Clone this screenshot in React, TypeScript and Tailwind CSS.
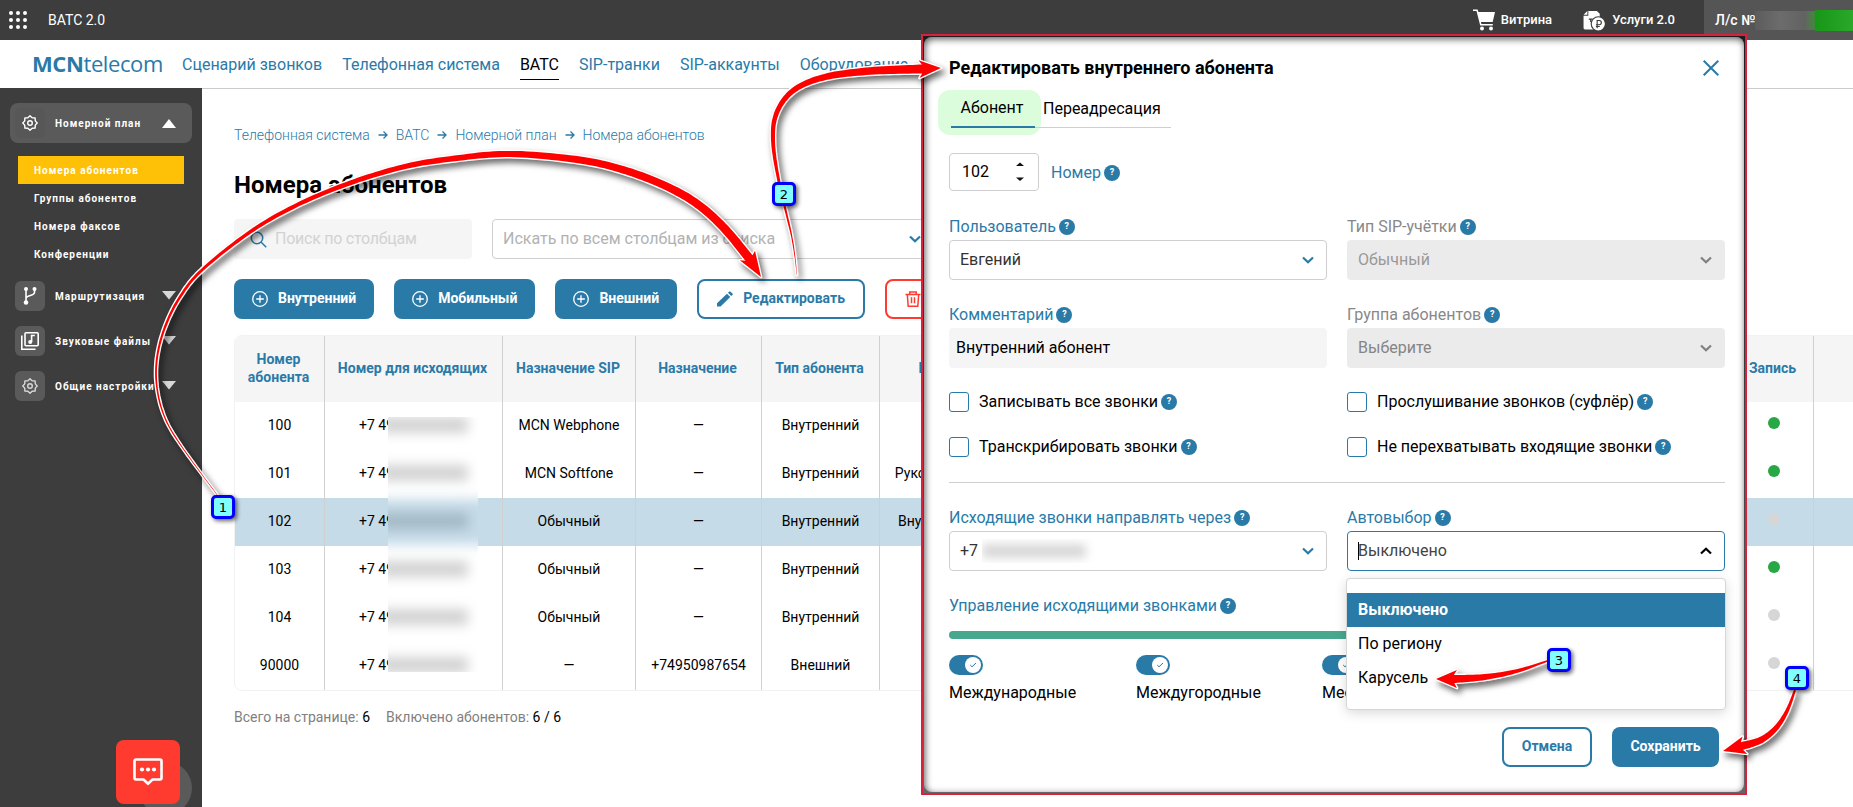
import type { ReactNode } from "react";
import { clsx } from "clsx";

type Point = [number, number];

const navItems = ["Сценарий звонков", "Телефонная система", "ВАТС", "SIP-транки", "SIP-аккаунты", "Оборудование"];
const crumbs = ["Телефонная система", "ВАТС", "Номерной план", "Номера абонентов"];
const planItems = ["Номера абонентов", "Группы абонентов", "Номера факсов", "Конференции"];

const rows = [
  { num: "100", sip: "MCN Webphone", target: "—", type: "Внутренний", note: "", rec: true },
  { num: "101", sip: "MCN Softfone", target: "—", type: "Внутренний", note: "Руководитель отдела", rec: true },
  { num: "102", sip: "Обычный", target: "—", type: "Внутренний", note: "Внутренний абонент", rec: false },
  { num: "103", sip: "Обычный", target: "—", type: "Внутренний", note: "", rec: true },
  { num: "104", sip: "Обычный", target: "—", type: "Внутренний", note: "", rec: false },
  { num: "90000", sip: "—", target: "+74950987654", type: "Внешний", note: "", rec: false }
];

const tableGrid = "grid grid-cols-[90px_178px_133px_126px_118px_172px_682px_80px_1fr]";

function Gear({ className }: { className?: string }) {
  return (
    <svg viewBox="0 0 16 16" className={clsx("size-4", className)} fill="none" stroke="currentColor" strokeWidth="1.4" strokeLinejoin="round">
      <path d="M8 .8 10.1 2.7 13.1 2.9 13.3 5.9 15.2 8 13.3 10.1 13.1 13.1 10.1 13.3 8 15.2 5.9 13.3 2.9 13.1 2.7 10.1.8 8 2.7 5.9 2.9 2.9 5.9 2.7Z" />
      <circle cx="8" cy="8" r="2.3" />
    </svg>
  );
}

function Branch() {
  return (
    <svg viewBox="0 0 16 20" className="h-5 w-4" fill="none" stroke="currentColor" strokeWidth="1.6">
      <path d="M4 3v13M12.500 3v3.500c0 3.500-8.500 2.500-8.500 6" />
      <circle cx="4" cy="3" r="2" fill="currentColor" stroke="none" />
      <circle cx="12.500" cy="3" r="2" fill="currentColor" stroke="none" />
      <circle cx="4" cy="16.500" r="2.300" fill="currentColor" stroke="none" />
    </svg>
  );
}

function Music() {
  return (
    <svg viewBox="0 0 18 18" className="size-[18px]" fill="none" stroke="currentColor" strokeWidth="1.600">
      <rect x="4" y=".8" width="13.200" height="13" rx="1" />
      <path d="M.8 3.500v13.700h13.700" />
      <path d="M10.600 10V3.500h3.200" />
      <circle cx="9.200" cy="10" r="2" fill="currentColor" stroke="none" />
    </svg>
  );
}

function Triangle({ up }: { up?: boolean }) {
  return (
    <svg viewBox="0 0 14 9" className={clsx("h-[9px] w-3.5", up ? "text-white" : "-translate-y-px text-[#d8d8d8]")} fill="currentColor">
      <path d={up ? "M7 0 14 9H0Z" : "M0 0h14L7 8.500Z"} />
    </svg>
  );
}

function Chevron({ up, className }: { up?: boolean; className?: string }) {
  return (
    <svg viewBox="0 0 12 8" className={clsx("h-2 w-3", className)} fill="none" stroke="currentColor" strokeWidth="2.200">
      <path d={up ? "M1 6.500 6 1.700l5 4.800" : "M1 1.500 6 6.300l5-4.800"} />
    </svg>
  );
}

function Help() {
  return (
    <span className="flex size-4 shrink-0 items-center justify-center rounded-full bg-[#2a7aa8] text-[9px] font-bold text-white">?</span>
  );
}

function Label({ children, muted }: { children: ReactNode; muted?: boolean }) {
  return (
    <div className={clsx("flex h-7 items-center gap-[3px] pt-0.5 text-base", muted ? "text-[#888888]" : "text-[#2a7aa8]")}>
      <span>{children}</span>
      <Help />
    </div>
  );
}

function Select({ children, variant = "normal" }: { children: ReactNode; variant?: "normal" | "disabled" | "open" }) {
  return (
    <div
      className={clsx(
        "flex h-10 items-center justify-between rounded border pr-3 pl-2.5 text-base",
        variant === "normal" && "border-[#cfcfcf] text-[#333333]",
        variant === "disabled" && "border-[#ebebeb] bg-[#ebebeb] text-[#999999]",
        variant === "open" && "border-[#2a7aa8] text-[#444444]"
      )}
    >
      <span className="relative flex items-center">
        {variant === "open" ? <i className="absolute left-0 h-[18px] w-px bg-black" /> : null}
        {children}
      </span>
      <Chevron
        up={variant === "open"}
        className={variant === "normal" ? "text-[#2a7aa8]" : variant === "open" ? "text-black" : "text-[#808080]"}
      />
    </div>
  );
}

function Check({ children }: { children: ReactNode }) {
  return (
    <div className="flex h-[45px] items-center gap-[3px]">
      <span className="mr-[7px] size-5 rounded-[3px] border border-[#2a7aa8]" />
      <span className="pt-px text-base">{children}</span>
      <Help />
    </div>
  );
}

function Toggle({ children }: { children: ReactNode }) {
  return (
    <div className="flex flex-col gap-2">
      <div className="flex h-5 w-[34px] items-center justify-end rounded-full bg-[#2a7aa8] pr-0.5">
        <span className="flex size-4 items-center justify-center rounded-full bg-white">
          <svg viewBox="0 0 8 6" className="h-1.5 w-2" fill="none" stroke="#2a7aa8" strokeWidth="1">
            <path d="M1.200 3 3 4.800 7 1" />
          </svg>
        </span>
      </div>
      <span className="text-base leading-5">{children}</span>
    </div>
  );
}

function AddButton({ children }: { children: ReactNode }) {
  return (
    <button className="flex h-10 items-center gap-2.5 rounded-lg bg-[#2a7aa8] px-[18px] text-sm font-bold text-white">
      <svg viewBox="0 0 16 16" className="size-4" fill="none" stroke="currentColor" strokeWidth="1.300">
        <circle cx="8" cy="8" r="7.300" />
        <path d="M8 4.200v7.600M4.200 8h7.600" />
      </svg>
      <span className="-translate-y-px">{children}</span>
    </button>
  );
}

// Smooth line through the points, sampled densely.
function sample(points: Point[]): Point[] {
  const out: Point[] = [];
  for (let i = 0; i < points.length - 1; i++) {
    const p0 = points[Math.max(0, i - 1)];
    const p1 = points[i];
    const p2 = points[i + 1];
    const p3 = points[Math.min(points.length - 1, i + 2)];
    for (let s = 0; s < 12; s++) {
      const t = s / 12;
      const at = (k: 0 | 1) =>
        0.5 *
        (2 * p1[k] +
          (p2[k] - p0[k]) * t +
          (2 * p0[k] - 5 * p1[k] + 4 * p2[k] - p3[k]) * t * t +
          (3 * p1[k] - p0[k] - 3 * p2[k] + p3[k]) * t * t * t);
      out.push([at(0), at(1)]);
    }
  }
  out.push(points[points.length - 1]);
  return out;
}

// Arrow whose shaft grows from `from` to `to` pixels and ends in a head.
function Arrow({ points, tip, from, to, head }: { points: Point[]; tip: Point; from: number; to: number; head: number }) {
  const line = sample(points);
  const run = [0];
  for (let i = 1; i < line.length; i++) {
    run.push(run[i - 1] + Math.hypot(line[i][0] - line[i - 1][0], line[i][1] - line[i - 1][1]));
  }
  const total = run[run.length - 1];
  const left: Point[] = [];
  const right: Point[] = [];
  line.forEach(([x, y], i) => {
    const a = line[Math.max(0, i - 1)];
    const b = line[Math.min(line.length - 1, i + 1)];
    const len = Math.hypot(b[0] - a[0], b[1] - a[1]) || 1;
    const nx = -(b[1] - a[1]) / len;
    const ny = (b[0] - a[0]) / len;
    const w = (from + ((to - from) * run[i]) / total) / 2;
    left.push([x + nx * w, y + ny * w]);
    right.push([x - nx * w, y - ny * w]);
  });
  const end = line[line.length - 1];
  const d = Math.hypot(tip[0] - end[0], tip[1] - end[1]);
  const ux = (tip[0] - end[0]) / d;
  const uy = (tip[1] - end[1]) / d;
  const barbs: Point[] = [
    [end[0] - ux * 3 - uy * head, end[1] - uy * 3 + ux * head],
    tip,
    [end[0] - ux * 3 + uy * head, end[1] - uy * 3 - ux * head]
  ];
  const path = "M" + [...left, ...barbs, ...right.reverse()].map((p) => p.map((n) => n.toFixed(1)).join(" ")).join("L") + "Z";
  return <path d={path} fill="#ff0000" stroke="#ffffff" strokeWidth="2.800" strokeLinejoin="round" paintOrder="stroke" />;
}

function Badge({ n, className }: { n: number; className: string }) {
  return (
    <div
      className={clsx(
        "absolute flex size-6 items-center justify-center rounded-[5px] border-[3px] border-[#0000ff] bg-[#80ffff] font-['DejaVu_Sans',sans-serif] text-[13px] leading-none text-black shadow-[2px_2px_4px_rgba(0,0,0,0.6)]",
        className
      )}
    >
      {n}
    </div>
  );
}

function TopBar() {
  return (
    <header className="flex h-10 shrink-0 items-center bg-[#3d3d3d] text-white">
      <svg viewBox="0 0 18 18" className="ml-[9px] size-[18px]" fill="currentColor">
        {[2, 9, 16].map((y) => [2, 9, 16].map((x) => <circle key={`${x}-${y}`} cx={x} cy={y} r="2" />))}
      </svg>
      <span className="ml-[21px] text-sm">ВАТС 2.0</span>
      <div className="ml-auto flex h-9 items-center text-[13px] font-medium">
        <svg viewBox="0 0 22 22" className="h-[22px] w-[22px]" fill="currentColor">
          <path d="M0 .5h4.600l.8 2.600H22l-2.300 10H7.900l.5 1.800h11.400v1.500H7.200L3.500 2H0Z" />
          <circle cx="9" cy="19.500" r="2" />
          <circle cx="18" cy="19.500" r="2" />
        </svg>
        <span className="ml-1.5">Витрина</span>
        <svg viewBox="0 0 23 21" className="ml-[31px] h-[21px] w-[23px] pt-px">
          <path d="M5 0h9l3 3v16.500H2A2 2 0 0 1 0 18V5h5Z" fill="#fff" />
          <path d="M0 4 4 0v4Z" fill="#fff" />
          <path d="M5.500 8.500h4M7.500 8.500v3" stroke="#3d3d3d" strokeWidth="1.200" />
          <circle cx="15.500" cy="13.500" r="7.500" fill="#fff" stroke="#3d3d3d" strokeWidth="1.200" />
          <path d="M14.300 18v-8h2.200a2.200 2.200 0 0 1 0 4.400h-3.500M13 16.300h4" stroke="#3d3d3d" strokeWidth="1.200" fill="none" />
        </svg>
        <span className="ml-1.5">Услуги 2.0</span>
      </div>
      <div className="ml-[29px] flex h-10 w-[149px] items-center overflow-hidden bg-[#555555] pl-[11px] text-sm font-medium">
        <span className="w-10 shrink-0 whitespace-nowrap">Л/с №</span>
        <div className="flex h-[21px] flex-1 items-center">
          <span className="h-[19px] w-[50px] bg-gradient-to-r from-[#5c5c5c] via-[#6c6c6c] to-[#626262]" />
          <span className="h-[19px] w-2.5 bg-gradient-to-r from-[#626262] to-[#3b8a36]" />
          <span className="h-[21px] flex-1 bg-gradient-to-r from-[#179617] to-[#2aa82a]" />
        </div>
      </div>
    </header>
  );
}

function Sidebar() {
  const groups = [
    { title: "Маршрутизация", icon: <Branch /> },
    { title: "Звуковые файлы", icon: <Music /> },
    { title: "Общие настройки", icon: <Gear className="text-[#d8d8d8]" /> }
  ];
  return (
    <aside className="relative w-[202px] shrink-0 bg-[#3d3d3d] px-2.5 pt-[15px] text-[10px] font-bold tracking-[1px] text-white">
      <div className="flex h-10 items-center rounded-lg bg-[#5a5a5a] pr-4 pl-[5px]">
        <span className="flex size-[30px] items-center justify-center rounded-md bg-[#575757]">
          <Gear />
        </span>
        <span className="ml-2.5 flex-1">Номерной план</span>
        <Triangle up />
      </div>
      <ul className="mx-2 mt-[13px]">
        {planItems.map((item, i) => (
          <li key={item} className={clsx("flex h-7 items-center pl-4", i === 0 && "bg-[#ffc107]")}>
            {item}
          </li>
        ))}
      </ul>
      <div className="mt-[13px] flex flex-col gap-[15px]">
        {groups.map((g) => (
          <div key={g.title} className="flex h-[30px] items-center pr-4 pl-[5px]">
            <span className="flex size-[30px] items-center justify-center rounded-md bg-[#5a5a5a]">{g.icon}</span>
            <span className="ml-2.5 flex-1 whitespace-nowrap">{g.title}</span>
            <Triangle />
          </div>
        ))}
      </div>
      <div className="absolute top-[673px] left-[138px] size-[54px] rounded-full bg-[#5a5a5a]" />
      <div className="absolute top-[652px] left-[116px] flex size-16 items-center justify-center rounded-lg bg-[#ff3b30]">
        <svg viewBox="0 0 30 28" className="h-7 w-[30px]" fill="none" stroke="#fff" strokeWidth="2.600" strokeLinejoin="round">
          <path d="M3 1.500h24a1.500 1.500 0 0 1 1.500 1.500v17a1.500 1.500 0 0 1-1.500 1.500h-7.500L15 25.800l-4.500-4.300H3A1.500 1.500 0 0 1 1.500 20V3A1.500 1.500 0 0 1 3 1.500Z" />
          <g fill="#fff" stroke="none">
            <circle cx="9" cy="11.500" r="2.100" />
            <circle cx="15" cy="11.500" r="2.100" />
            <circle cx="21" cy="11.500" r="2.100" />
          </g>
        </svg>
      </div>
    </aside>
  );
}

function SubscribersTable() {
  const heads = ["Номер абонента", "Номер для исходящих", "Назначение SIP", "Назначение", "Тип абонента", "Комментарий", "", "Запись", ""];
  return (
    <div className="relative mt-4 h-[356px] w-[1700px] rounded-lg border border-[#f2f2f2] text-sm">
      <div className={clsx(tableGrid, "h-[66px] rounded-tl-lg bg-[#f5f5f5] font-bold text-[#2a7aa8]")}>
        {heads.map((h, i) => (
          <div key={i} className="flex items-center justify-center border-r border-[#d0d0d0] pr-2 pb-0.5 pl-1.5 text-center leading-[18px]">
            {h}
          </div>
        ))}
      </div>
      {rows.map((r) => (
        <div
          key={r.num}
          className={clsx(
            tableGrid,
            "h-12 *:flex *:items-center *:justify-center *:border-r *:border-[#d0d0d0] *:pb-0.5",
            r.num === "102" && "bg-[#c5dbe8]"
          )}
        >
          <div>{r.num}</div>
          <div>
            <span className="w-[109px]">+7 49</span>
          </div>
          <div>{r.sip}</div>
          <div>{r.target}</div>
          <div>{r.type}</div>
          <div>{r.note}</div>
          <div />
          <div>
            <span className={clsx("mb-1 size-3 rounded-full", r.rec ? "bg-[#28a745]" : "bg-[#d6d6d6]")} />
          </div>
          <div />
        </div>
      ))}
      <div className="absolute top-[81px] left-[153px] h-[255px] w-[90px] overflow-hidden bg-white">
        <div className="absolute -inset-x-3 top-[82px] h-[46px] bg-[#c5dbe8] blur-[6px]" />
        <div className="absolute top-0 -left-2 flex flex-col gap-8">
          {rows.map((r) => (
            <span key={r.num} className={clsx("h-4 w-[88px] blur-[6px]", r.num === "102" ? "bg-[#a3b8c5]" : "bg-[#d2d2d2]")} />
          ))}
        </div>
      </div>
    </div>
  );
}

function MainContent() {
  return (
    <main className="w-[1651px] overflow-hidden border-t border-[#cccccc] pt-[34px] pl-8">
      <div className="flex h-6 items-center gap-2 text-sm font-light text-[#2a7aa8]">
        {crumbs.map((c, i) => (
          <div key={c} className="flex items-center gap-2">
            {i > 0 ? (
              <svg viewBox="1 0 10 10" className="size-2.5" fill="none" stroke="currentColor" strokeWidth="1.300">
                <path d="M1.500 5h8.500M6.500 1.500 10 5 6.500 8.500" />
              </svg>
            ) : null}
            <span>{c}</span>
          </div>
        ))}
      </div>
      <h1 className="mt-[22px] text-2xl leading-8 font-bold">Номера абонентов</h1>
      <div className="mt-[18px] flex gap-5 text-base">
        <div className="flex h-10 w-[238px] items-center gap-2 rounded bg-[#f5f5f5] pl-4 tracking-[-0.25px] text-[#d2d2d2]">
          <svg viewBox="0 0 17 17" className="size-[17px]" fill="none" stroke="#2a7aa8" strokeWidth="1.500">
            <circle cx="7" cy="7" r="5.700" />
            <path d="m11.200 11.200 5 5" />
          </svg>
          Поиск по столбцам
        </div>
        <div className="flex h-10 w-[440px] items-center justify-between rounded border border-[#cfcfcf] pr-2.5 pl-2.5 text-[#b2b2b2]">
          Искать по всем столбцам из списка
          <Chevron className="text-[#2a7aa8]" />
        </div>
      </div>
      <div className="mt-5 flex gap-5">
        <AddButton>Внутренний</AddButton>
        <AddButton>Мобильный</AddButton>
        <AddButton>Внешний</AddButton>
        <button className="flex h-10 items-center gap-2.5 rounded-lg border-2 border-[#2a7aa8] px-[18px] text-sm font-bold text-[#2a7aa8]">
          <svg viewBox="0 0 17 17" className="size-4" fill="currentColor">
            <path d="M0 16.500V13L10.600 2.800l3.500 3.500L3.800 16.500ZM11.600 1.900 12.900.7a1 1 0 0 1 1.500 0l2 2a1 1 0 0 1 0 1.500L15.100 5.400Z" />
          </svg>
          <span className="-translate-y-px">Редактировать</span>
        </button>
        <button className="flex h-10 w-40 items-center rounded-lg border-2 border-[#ff3b30] px-[18px] text-[#ff3b30]">
          <svg viewBox="0 0 16 16" className="size-4" fill="none" stroke="currentColor" strokeWidth="1.500">
            <path d="M.5 3.500h15M4.800 3.500V1h6.400v2.500M2.300 3.500l.9 11.700h9.600l.9-11.700M6.500 6.300v6M9.500 6.300v6" />
          </svg>
        </button>
      </div>
      <SubscribersTable />
      <div className="mt-4 flex gap-4 text-sm text-[#808080]">
        <span>
          Всего на странице: <span className="text-black">6</span>
        </span>
        <span>
          Включено абонентов: <span className="text-black">6 / 6</span>
        </span>
      </div>
    </main>
  );
}

function EditDialog() {
  return (
    <div className="absolute top-[34px] left-[921px] h-[761px] w-[826px] border-2 border-[#d6213f] bg-gradient-to-b from-[#1c1c1c] to-[#666666] p-px">
      <div className="h-full rounded-lg bg-white pt-[19px] pr-[19px] pl-[25px] shadow-[inset_1px_2px_7px_rgba(0,0,0,0.65)]">
        <div className="flex h-6 items-center justify-between pr-1.5">
          <h2 className="text-lg font-bold">Редактировать внутреннего абонента</h2>
          <svg viewBox="0 0 16 16" className="size-4" stroke="#2a7aa8" strokeWidth="2">
            <path d="m.7.7 14.600 14.600M15.300.7.7 15.300" />
          </svg>
        </div>
        <div className="mt-2.5 -ml-[11px] flex h-[45px] text-base">
          <div className="flex w-[103px] rounded-xl bg-[#dcfddc] pl-[13px]">
            <span className="flex h-[38px] w-[84px] items-center justify-center border-b-2 border-[#2a7aa8] pr-0.5">Абонент</span>
            <span className="h-[38px] w-1.5 border-b border-[#cfcfcf]" />
          </div>
          <span className="flex h-[38px] w-[130px] items-center border-b border-[#cfcfcf] pl-0.5">Переадресация</span>
        </div>
        <div className="mt-[18px] flex h-[38px] items-center gap-3">
          <div className="flex h-[38px] w-[90px] items-center justify-between rounded border border-[#cfcfcf] pr-3.5 pl-3 text-base">
            102
            <svg viewBox="0 0 8 20" className="h-5 w-2" fill="#111">
              <path d="M0 4 4 .5 8 4ZM0 15.500 4 19l4-3.500Z" />
            </svg>
          </div>
          <Label>Номер</Label>
        </div>
        <div className="mt-[21px] grid grid-cols-2 gap-x-5 gap-y-5">
          <div>
            <Label>Пользователь</Label>
            <Select>Евгений</Select>
          </div>
          <div>
            <Label muted>Тип SIP-учётки</Label>
            <Select variant="disabled">Обычный</Select>
          </div>
          <div>
            <Label>Комментарий</Label>
            <div className="flex h-10 items-center rounded bg-[#f5f5f5] pl-[7px] text-base">Внутренний абонент</div>
          </div>
          <div>
            <Label muted>Группа абонентов</Label>
            <Select variant="disabled">
              <span className="text-[#858585]">Выберите</span>
            </Select>
          </div>
        </div>
        <div className="mt-[11px] grid grid-cols-2 gap-x-5 border-b border-[#cfcfcf] pb-[13px]">
          <Check>Записывать все звонки</Check>
          <Check>Прослушивание звонков (суфлёр)</Check>
          <Check>Транскрибировать звонки</Check>
          <Check>Не перехватывать входящие звонки</Check>
        </div>
        <div className="mt-5 grid grid-cols-2 gap-x-5">
          <div>
            <Label>Исходящие звонки направлять через</Label>
            <Select>
              +7
              <span className="ml-1 flex h-6 w-[115px] items-center overflow-hidden">
                <i className="h-3.5 w-[104px] bg-[#d8d8d8] blur-[5px]" />
              </span>
            </Select>
          </div>
          <div className="relative">
            <Label>Автовыбор</Label>
            <Select variant="open">Выключено</Select>
            <ul className="absolute top-[75px] -right-px -left-px z-10 h-[132px] rounded border border-[#d6d6d6] bg-white pt-3.5 text-base shadow-[0_3px_12px_rgba(0,0,0,0.15)]">
              <li className="flex h-[34px] items-center bg-[#2a7aa8] pl-[11px] font-bold text-white">Выключено</li>
              <li className="flex h-[34px] items-center pl-[11px]">По региону</li>
              <li className="flex h-[34px] items-center pl-[11px]">Карусель</li>
            </ul>
          </div>
        </div>
        <div className="mt-5">
          <Label>Управление исходящими звонками</Label>
          <div className="mt-3 h-2 rounded-full bg-[#48a88f]" />
          <div className="mt-4 grid grid-cols-[187px_186px_1fr]">
            <Toggle>Международные</Toggle>
            <Toggle>Междугородные</Toggle>
            <Toggle>Местные</Toggle>
          </div>
        </div>
        <div className="mt-6 flex justify-end gap-5 pr-1.5 text-sm font-bold">
          <button className="h-10 w-[90px] rounded-lg border-2 border-[#2a7aa8] pb-0.5 text-[#2a7aa8]">Отмена</button>
          <button className="h-10 w-[107px] rounded-lg bg-[#2a7aa8] pb-0.5 text-white">Сохранить</button>
        </div>
      </div>
    </div>
  );
}

function Steps() {
  return (
    <div className="absolute inset-0 z-20">
      <svg viewBox="0 0 1853 807" className="absolute inset-0 h-[807px] w-[1853px] drop-shadow-[3px_4px_3px_rgba(0,0,0,0.6)]">
        <Arrow
          points={[
            [218, 496], [182, 447], [165, 418], [157, 388], [157, 358], [165, 327], [180, 297], [202, 270], [250, 232],
            [297, 205], [350, 183], [403, 167], [450, 159], [510, 154], [580, 160], [627, 171], [670, 188], [700, 206],
            [725, 229], [749, 258]
          ]}
          tip={[761, 277]}
          from={0.4}
          to={9}
          head={9}
        />
        <Arrow
          points={[[797, 275], [792, 238], [779, 182], [773, 140], [777, 112], [794, 90], [825, 77], [870, 71], [922, 69]]}
          tip={[941, 68]}
          from={0.3}
          to={9}
          head={9}
        />
        <Arrow points={[[1550, 660], [1517, 671], [1485, 677], [1454, 679]]} tip={[1436, 679]} from={1.5} to={8} head={9} />
        <Arrow points={[[1795, 690], [1787, 711], [1776, 728], [1761, 740], [1742, 746]]} tip={[1723, 751]} from={2} to={8} head={9} />
      </svg>
      <Badge n={1} className="top-[495px] left-[211px]" />
      <Badge n={2} className="top-[182px] left-[772px]" />
      <Badge n={3} className="top-[648px] left-[1547px]" />
      <Badge n={4} className="top-[666px] left-[1785px]" />
    </div>
  );
}

export default function App() {
  return (
    <div className="relative flex h-[807px] w-[1853px] flex-col overflow-hidden bg-white font-[Roboto,sans-serif] text-black">
      <TopBar />
      <div className="flex h-12 shrink-0 items-center pl-8 text-[#2a7aa8]">
        <span className="w-[130px] pb-0.5 font-['Open_Sans',sans-serif] text-[22px] leading-none tracking-[-0.4px] whitespace-nowrap">
          <b>MCN</b>telecom
        </span>
        <nav className="ml-5 flex gap-5 text-base">
          {navItems.map((item) => (
            <span key={item} className={clsx("border-b pt-1 pb-0.5", item === "ВАТС" ? "border-black text-black" : "border-transparent")}>
              {item}
            </span>
          ))}
        </nav>
      </div>
      <div className="flex min-h-0 flex-1">
        <Sidebar />
        <MainContent />
      </div>
      <EditDialog />
      <Steps />
    </div>
  );
}
